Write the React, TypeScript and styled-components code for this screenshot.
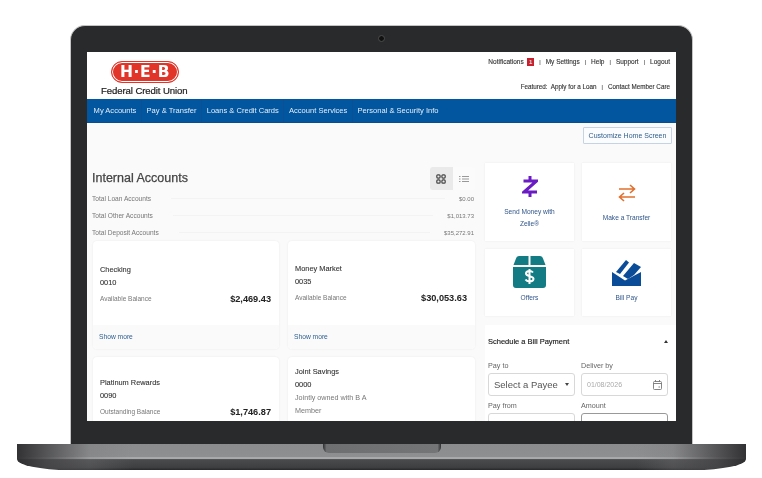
import React from "react";
import styled, { createGlobalStyle } from "styled-components";

const Global = createGlobalStyle`
  html, body { margin: 0; padding: 0; background: #fff; }
  body { font-family: "Liberation Sans", Arial, sans-serif; width: 762px; height: 478px; overflow: hidden; }
  * { box-sizing: border-box; }
`;

const Page = styled.div`
  width: 762px; height: 478px; padding: 25px 16px 0 17px;
  display: flex; flex-direction: column; align-items: stretch;
`;
const Bezel = styled.div`
  position: relative;
  width: 623px; height: 419px; margin-left: 53px;
  padding: 26px 16px 23px 16px;
  background: #292a2b;
  border: 1px solid #c4c4c4; border-bottom: 0;
  border-radius: 15px 15px 0 0;
`;
const Camera = styled.span`
  position: absolute; left: 307px; top: 9px;
  width: 7px; height: 7px; border-radius: 50%;
  background: #111; border: 1.5px solid #4c4d4f;
`;
const Screen = styled.div`
  width: 589px; height: 369px; overflow: hidden; background: #fafafa;
  display: flex; flex-direction: column;
  filter: blur(0.3px);
`;
const Header = styled.header`
  height: 47px; background: #fff; flex: none;
  display: flex; justify-content: space-between; padding: 0 6px 0 14px;
`;
const LogoBlock = styled.div`
  display: flex; flex-direction: column; align-items: flex-start; padding-top: 9px;
`;
const Pill = styled.div`
  width: 68px; height: 22px; margin-left: 10px; border-radius: 11px;
  background: #e2352a; border: 1px solid #e2352a; box-shadow: inset 0 0 0 1px #fff;
  color: #fff; font-weight: 700; font-size: 15.5px; line-height: 20px; letter-spacing: 0.6px;
  text-align: center; font-family: "DejaVu Sans", sans-serif;
`;
const LogoText = styled.div`
  font-size: 9.6px; font-weight: 400; color: #222; line-height: 13px; margin-top: 1px; letter-spacing: -0.1px;
  -webkit-text-stroke: 0.2px #222; white-space: nowrap;
`;
const Utility = styled.div`
  display: flex; flex-direction: column; align-items: flex-end; padding-top: 5px; gap: 16px;
`;
const LinkRow = styled.div<{ $size: number }>`
  display: flex; align-items: center; gap: 4.5px; height: 9px;
  font-size: ${(p) => p.$size}px; color: #333; white-space: nowrap; -webkit-text-stroke: 0.12px #333;
`;
const Badge = styled.span`
  display: inline-block; width: 7px; height: 8px; background: #c8202c; color: #fff;
  font-size: 6px; font-weight: 700; line-height: 8px; text-align: center; margin-left: -1px;
`;
const Sep = styled.span`color: #666; font-size: 5.5px; margin: 0 0.5px;`;
const Nav = styled.nav`
  height: 24px; flex: none; background: #02569f; display: flex; align-items: center; padding-left: 2px;
  border-bottom: 1px solid #0a4c8d;
`;
const NavItem = styled.a`
  height: 100%; display: flex; align-items: center; padding: 0 4.6px;
  color: #e4eef8; font-size: 7.55px; white-space: nowrap;
  & + & { border-left: 1px solid #0c4f92; }
`;
const ToolBar = styled.div`
  flex: none; display: flex; justify-content: flex-end; padding: 4px 4px 0 0;
`;
const Customize = styled.button`
  width: 89px; height: 17px; padding: 0; background: #fbfcfd; border: 1px solid #c5d3e2; border-radius: 1px;
  color: #34608f; font: 7px "Liberation Sans", sans-serif;
`;
const Main = styled.div`
  flex: 1; min-height: 0; display: grid; grid-template-columns: 383px 191px; column-gap: 10px;
  padding: 19px 0 0 5px;
`;
const Left = styled.section`padding-top: 4px; min-width: 0;`;
const TitleRow = styled.div`
  height: 23px; display: flex; justify-content: space-between; align-items: center;
`;
const Title = styled.h2`
  margin: 0 0 2px; font-size: 12.5px; font-weight: 400; color: #444; -webkit-text-stroke: 0.25px #444;
`;
const Toggle = styled.div`
  width: 45px; height: 23px; display: flex; background: #fff; border-radius: 3px; overflow: hidden;
`;
const ToggleCell = styled.span<{ $on?: boolean }>`
  flex: 1; display: flex; align-items: center; justify-content: center;
  background: ${(p) => (p.$on ? "#eaeaea" : "#fbfbfb")};
`;
const TotalRow = styled.div`
  height: 17px; display: flex; align-items: center; justify-content: space-between; padding-right: 1px;
  font-size: 6.6px; color: #777;
`;
const TotalRule = styled.span`
  flex: 1; height: 1px; background: #f3f3f3; margin: 0 14px 0 20px;
`;
const TotalValue = styled.span`font-size: 6px;`;
const Cards = styled.div`
  display: grid; grid-template-columns: 186px 187px; grid-auto-rows: 108px; column-gap: 9px; row-gap: 8px;
  padding-left: 1px; margin-right: -1px;
`;
const Card = styled.article`
  background: #fff; border-radius: 4px; box-shadow: 0 0 2px rgba(0,0,0,.08);
  display: flex; flex-direction: column; overflow: hidden;
`;
const CardBody = styled.div<{ $top: number }>`
  flex: 1; padding: ${(p) => p.$top}px 8px 0 7px; display: flex; flex-direction: column;
`;
const Name = styled.div`font-size: 7.4px; color: #333; line-height: 13px; -webkit-text-stroke: 0.1px #333;`;
const Muted = styled.div`font-size: 7.2px; color: #777; line-height: 13px;`;
const BalanceRow = styled.div`
  display: flex; justify-content: space-between; align-items: center; margin-top: 3px; height: 13px;
`;
const BalanceLabel = styled.span`font-size: 6.5px; color: #777;`;
const Amount = styled.span`font-size: 9.2px; font-weight: 700; color: #222;`;
const CardFoot = styled.div`
  height: 24px; flex: none; background: #fafafa; padding: 8px 6px 0; font-size: 6.7px; color: #2d5e92;
`;
const Right = styled.aside`min-width: 0; display: flex; flex-direction: column;`;
const Tiles = styled.div`
  display: grid; grid-template-columns: 89px 89px; grid-template-rows: 78px 67px; gap: 8px; flex: none;
`;
const Tile = styled.a<{ $wide?: boolean }>`
  background: #fff; box-shadow: 0 0 2px rgba(0,0,0,.07); display: flex; flex-direction: column; align-items: center;
  justify-content: ${(p) => (p.$wide ? "flex-start" : "flex-end")};
  padding: ${(p) => (p.$wide ? "12px 4px 0" : "0 4px 13px")};
  color: #30558a; font-size: 6.6px; line-height: 11.5px; text-align: center;
`;
const TileIcon = styled.svg<{ $gap: number }>`flex: none; margin-bottom: ${(p) => p.$gap}px;`;
const Panel = styled.div`
  margin-top: 9px; flex: 1; background: #fff; padding: 0 8px 0 3px; min-height: 0;
`;
const PanelHead = styled.div`
  height: 33px; display: flex; justify-content: space-between; align-items: center; margin-bottom: 2px;
  font-size: 7.5px; color: #222; -webkit-text-stroke: 0.15px #222;
`;
const Caret = styled.span`
  width: 0; height: 0; border: 2.5px solid transparent; border-bottom: 3px solid #333; border-top: 0;
`;
const FieldGrid = styled.div`
  display: grid; grid-template-columns: 87px 87px; column-gap: 6px; row-gap: 4px;
`;
const Field = styled.div`display: flex; flex-direction: column; gap: 1px;`;
const Label = styled.label`font-size: 7.2px; color: #666; line-height: 12px;`;
const Control = styled.div<{ $strong?: boolean }>`
  height: 23px; border: 1px solid ${(p) => (p.$strong ? "#999" : "#d8d8d8")}; border-radius: 3px;
  display: flex; align-items: center; justify-content: space-between; padding: 0 5px;
  background: #fff;
`;
const SelectText = styled.span`font-size: 9.5px; color: #555;`;
const SelectCaret = styled.span`
  width: 0; height: 0; border: 2.5px solid transparent; border-top: 3px solid #444; border-bottom: 0;
`;
const DateText = styled.span`font-size: 7px; color: #aaa;`;
const Base = styled.div`
  position: relative; width: 729px; height: 26px; flex: none; overflow: hidden;
  border-radius: 0 0 52px 52px / 0 0 11px 11px;
  background:
    linear-gradient(to right, rgba(45,45,47,.95) 0, rgba(70,70,72,.8) 4%, rgba(120,120,122,.3) 10%, rgba(0,0,0,0) 16%, rgba(0,0,0,0) 85%, rgba(120,120,122,.3) 90%, rgba(70,70,72,.8) 96%, rgba(45,45,47,.95) 100%),
    linear-gradient(to bottom, #8b8c8e 0, #8e8f91 50%, #a9aaac 52%, #a9aaac 56%, #4a4b4d 60%, #3e3f41 90%, #262728 100%);
`;
const Notch = styled.div`
  position: absolute; left: 306px; top: 0; width: 118px; height: 9px;
  border-radius: 0 0 6px 6px;
  background: linear-gradient(to right, #2e2f30 0, #6e6f71 3%, #747577 97%, #2e2f30 100%);
`;

const accounts = [
  { name: "Checking", no: "0010", label: "Available Balance", amt: "$2,469.43", top: 22, foot: true },
  { name: "Money Market", no: "0035", label: "Available Balance", amt: "$30,053.63", top: 21, foot: true },
  { name: "Platinum Rewards", no: "0090", label: "Outstanding Balance", amt: "$1,746.87", top: 19, foot: false },
];

export default function App() {
  return (
    <Page>
      <Global />
      <Bezel>
        <Camera />
        <Screen>
          <Header>
            <LogoBlock>
              <Pill>H·E·B</Pill>
              <LogoText>Federal Credit Union</LogoText>
            </LogoBlock>
            <Utility>
              <LinkRow $size={6.5}>
                <span>Notifications</span><Badge>1</Badge><Sep>|</Sep><span>My Settings</span><Sep>|</Sep>
                <span>Help</span><Sep>|</Sep><span>Support</span><Sep>|</Sep><span>Logout</span>
              </LinkRow>
              <LinkRow $size={6.3}>
                <span>Featured:&nbsp; Apply for a Loan</span><Sep>|</Sep><span>Contact Member Care</span>
              </LinkRow>
            </Utility>
          </Header>
          <Nav>
            {["My Accounts", "Pay & Transfer", "Loans & Credit Cards", "Account Services", "Personal & Security Info"].map((n) => (
              <NavItem key={n}>{n}</NavItem>
            ))}
          </Nav>
          <ToolBar><Customize>Customize Home Screen</Customize></ToolBar>
          <Main>
            <Left>
              <TitleRow>
                <Title>Internal Accounts</Title>
                <Toggle>
                  <ToggleCell $on>
                    <svg width="10" height="10" viewBox="0 0 10 10" fill="none" stroke="#444" strokeWidth="1.2">
                      <rect x="0.8" y="0.8" width="3.3" height="3.3" rx="1" /><rect x="5.9" y="0.8" width="3.3" height="3.3" rx="1" />
                      <rect x="0.8" y="5.9" width="3.3" height="3.3" rx="1" /><rect x="5.9" y="5.9" width="3.3" height="3.3" rx="1" />
                    </svg>
                  </ToggleCell>
                  <ToggleCell>
                    <svg width="10" height="8" viewBox="0 0 10 8" stroke="#999" strokeWidth="1">
                      <path d="M0 1.5h1.5M0 4h1.5M0 6.5h1.5M3 1.5h7M3 4h7M3 6.5h7" />
                    </svg>
                  </ToggleCell>
                </Toggle>
              </TitleRow>
              <TotalRow><span>Total Loan Accounts</span><TotalRule /><TotalValue>$0.00</TotalValue></TotalRow>
              <TotalRow><span>Total Other Accounts</span><TotalRule /><TotalValue>$1,013.73</TotalValue></TotalRow>
              <TotalRow><span>Total Deposit Accounts</span><TotalRule /><TotalValue>$35,272.91</TotalValue></TotalRow>
              <Cards>
                {accounts.map((a) => (
                  <Card key={a.name}>
                    <CardBody $top={a.top}>
                      <Name>{a.name}</Name>
                      <Name>{a.no}</Name>
                      <BalanceRow><BalanceLabel>{a.label}</BalanceLabel><Amount>{a.amt}</Amount></BalanceRow>
                    </CardBody>
                    {a.foot && <CardFoot>Show more</CardFoot>}
                  </Card>
                ))}
                <Card>
                  <CardBody $top={8}>
                    <Name>Joint Savings</Name>
                    <Name>0000</Name>
                    <Muted>Jointly owned with B A</Muted>
                    <Muted>Member</Muted>
                  </CardBody>
                </Card>
              </Cards>
            </Left>
            <Right>
              <Tiles>
                <Tile $wide>
                  <TileIcon $gap={8} width="16" height="23" viewBox="0 0 16 23" fill="none" stroke="#6a1bc4" strokeWidth="3">
                    <path d="M1.500 6h13L2 17h13M8 1v5M8 17v5" />
                  </TileIcon>
                  <span>Send Money with<br />Zelle®</span>
                </Tile>
                <Tile $wide>
                  <TileIcon $gap={10} style={{ marginTop: 9 }} width="18" height="18" viewBox="0 0 18 18" fill="none" stroke="#e2702d" strokeWidth="1.6">
                    <path d="M1 5h15M12 1l4.5 4-4.5 4M17 13H2M6 9l-4.5 4L6 17" />
                  </TileIcon>
                  <span>Make a Transfer</span>
                </Tile>
                <Tile>
                  <TileIcon $gap={4} width="33" height="32" viewBox="0 0 33 32">
                    <path d="M6 0h9.500v9H0.500L3 2.500A3 3 0 0 1 6 0zM17.500 0H27a3 3 0 0 1 3 2.500L32.500 9H17.500zM0 11h33v18a3 3 0 0 1-3 3H3a3 3 0 0 1-3-3z" fill="#127b84" />
                    <path d="M20 16.500c-.8-1-2-1.500-3.500-1.500-2 0-3.500 1-3.500 2.600 0 3.400 7.500 1.800 7.500 5.200 0 1.600-1.600 2.700-4 2.700-1.800 0-3.200-.6-4-1.900M16.500 13v15" fill="none" stroke="#fff" strokeWidth="2" />
                  </TileIcon>
                  <span>Offers</span>
                </Tile>
                <Tile>
                  <TileIcon $gap={6} width="30" height="27" viewBox="0 0 30 27">
                    <path d="M4 13 14 1l3 2.500L8 15z" fill="#0a4c97" />
                    <path d="M11 17 22 4l7 4-7 8-6 4z" fill="#0a4c97" />
                    <path d="M0 13l13 8.500L29 13v14H0z" fill="#0a4c97" />
                  </TileIcon>
                  <span>Bill Pay</span>
                </Tile>
              </Tiles>
              <Panel>
                <PanelHead><span>Schedule a Bill Payment</span><Caret /></PanelHead>
                <FieldGrid>
                  <Field>
                    <Label>Pay to</Label>
                    <Control><SelectText>Select a Payee</SelectText><SelectCaret /></Control>
                  </Field>
                  <Field>
                    <Label>Deliver by</Label>
                    <Control>
                      <DateText>01/08/2026</DateText>
                      <svg width="9" height="10" viewBox="0 0 9 10" fill="none" stroke="#777" strokeWidth="0.9">
                        <rect x="0.5" y="1.500" width="8" height="8" rx="1" /><path d="M0.500 3.500h8M2.500 0v2M6.500 0v2M5.500 7h1.500" />
                      </svg>
                    </Control>
                  </Field>
                  <Field>
                    <Label>Pay from</Label>
                    <Control />
                  </Field>
                  <Field>
                    <Label>Amount</Label>
                    <Control $strong />
                  </Field>
                </FieldGrid>
              </Panel>
            </Right>
          </Main>
        </Screen>
      </Bezel>
      <Base><Notch /></Base>
    </Page>
  );
}
